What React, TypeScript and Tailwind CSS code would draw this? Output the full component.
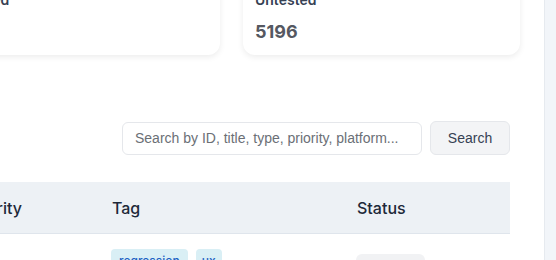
export default function App() {
  return (
    <div className="flex h-[260px] w-[556px] overflow-hidden bg-white font-['Inter',sans-serif]">
      <main className="flex-1 overflow-hidden">
        <div className="-ml-[57px] -mt-[22px] grid w-[577px] grid-cols-2 gap-[23px]">
          <div className="rounded-xl bg-white px-3 pb-[9px] pt-3 shadow-[0_2px_6px_rgba(0,0,0,0.08)]">
            <div className="text-sm font-semibold text-gray-700">Blocked</div>
            <div className="mt-2 text-lg font-bold text-gray-600">0</div>
          </div>
          <div className="rounded-xl bg-white px-3 pb-[9px] pt-3 shadow-[0_2px_6px_rgba(0,0,0,0.08)]">
            <div className="text-sm font-semibold text-gray-700">Untested</div>
            <div className="mt-2 text-lg font-bold text-[#555861]">5196</div>
          </div>
        </div>

        <div className="mt-[66px] flex w-[510px] items-center justify-end gap-2">
          <input
            type="text"
            placeholder="Search by ID, title, type, priority, platform..."
            className="h-[33px] w-[300px] rounded-md border border-gray-200 px-3 font-['Liberation_Sans',sans-serif] text-sm text-gray-700 placeholder:text-[#6b6f76] focus:outline-none"
          />
          <button className="h-[34px] w-[80px] rounded-md border border-gray-200 bg-gray-100 font-['Liberation_Sans',sans-serif] text-sm text-gray-700">
            Search
          </button>
        </div>

        <div className="mt-[27px] w-[510px]">
          <div className="-ml-[70px] grid h-[52px] grid-cols-[170px_245px_165px] items-center border-b border-[#dfe5ec] bg-[#edf1f5] text-base font-medium text-gray-800">
            <div className="pr-[78px] text-right">Priority</div>
            <div className="pl-3">Tag</div>
            <div className="pl-3">Status</div>
          </div>
          <div className="-ml-[70px] grid grid-cols-[170px_245px_165px]">
            <div />
            <div className="flex gap-2 pl-[11px] pt-[15px]">
              <span className="rounded bg-[#d9eff5] px-2 py-1 text-xs font-medium text-[#1f63c4]">
                regression
              </span>
              <span className="rounded bg-[#d9eff5] px-[6px] py-1 text-xs font-medium text-[#1f63c4]">
                ux
              </span>
            </div>
            <div className="pl-[11px] pt-5">
              <span className="block h-6 w-[69px] rounded-md bg-[#f1f2f4]" />
            </div>
          </div>
        </div>
      </main>
      <div className="w-[12px] border-l border-[#e6eaef] bg-[#f2f5f9]" />
    </div>
  );
}
